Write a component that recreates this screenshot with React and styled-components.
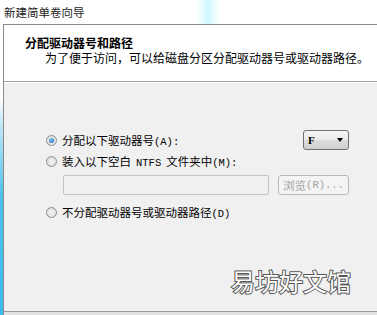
import styled, { createGlobalStyle } from "styled-components";

const GlobalStyle = createGlobalStyle`
  html, body {
    margin: 0;
    padding: 0;
    background: #ffffff;
  }
  body {
    font-family: "Noto Sans CJK SC", "Liberation Sans", sans-serif;
  }
`;

const Window = styled.div`
  width: 377px;
  height: 315px;
  overflow: hidden;
  display: flex;
  flex-direction: column;
  background: #ffffff;
  position: relative;
`;

const Glow = styled.div`
  position: absolute;
  left: 197px;
  top: 0;
  width: 22px;
  height: 24px;
  background: linear-gradient(90deg, rgba(200, 245, 255, 0), rgba(200, 245, 255, 0.9), rgba(200, 245, 255, 0));
`;

const TitleRow = styled.div`
  height: 24px;
  padding-left: 4px;
  display: flex;
  align-items: center;
  font-size: 11.5px;
  color: #222;
  flex-shrink: 0;
`;

const Frame = styled.div`
  flex: 1;
  display: flex;
  min-height: 0;
`;

const Edge = styled.div`
  width: 3px;
  flex-shrink: 0;
  background: linear-gradient(180deg, #ffffff 0%, #ffffff 25%, #bfe8f8 35%, #49c0ee 60%, #3bbdee 100%);
`;

const Panel = styled.div`
  flex: 1;
  display: flex;
  flex-direction: column;
  border-left: 1px solid #8a8a8a;
  border-top: 1px solid #8a8a8a;
`;

const Header = styled.div`
  height: 57px;
  background: #ffffff;
  padding: 10px 0 0 21px;
  box-sizing: border-box;
  border-bottom: 1px solid #a0a0a0;
  flex-shrink: 0;
`;

const Heading = styled.div`
  font-size: 12px;
  font-weight: bold;
  color: #000;
  line-height: 15px;
`;

const SubText = styled.div`
  font-size: 12px;
  color: #000;
  line-height: 15px;
  padding-left: 20px;
`;

const Body = styled.div`
  flex: 1;
  background: #f0f0f0;
  border-top: 1px solid #ffffff;
  border-bottom: 1px solid #9a9a9a;
  padding: 47px 28px 0 42px;
  display: flex;
  flex-direction: column;
`;

const Footer = styled.div`
  height: 3px;
  background: #e2e2e2;
  flex-shrink: 0;
`;

const OptionRow = styled.div`
  display: flex;
  align-items: center;
  justify-content: space-between;
  height: ${(p) => p.$h}px;
  margin-top: ${(p) => p.$mt || 0}px;
`;

const Label = styled.label`
  display: flex;
  align-items: center;
  gap: 5px;
  font-size: 11.5px;
  color: #000;
`;

const Radio = styled.span`
  width: 11px;
  height: 11px;
  border-radius: 50%;
  border: 1px solid #8e8e8e;
  box-sizing: border-box;
  background: radial-gradient(circle at 50% 50%, #f4f4f4 0%, #d4d4d4 100%);
  display: flex;
  align-items: center;
  justify-content: center;

  &::after {
    content: "";
    width: 5px;
    height: 5px;
    border-radius: 50%;
    background: radial-gradient(circle at 40% 35%, #7cc4f4 0%, #1a63c6 100%);
    display: ${(p) => (p.$checked ? "block" : "none")};
  }
`;

const Mono = styled.span`
  font-family: "Liberation Mono", "DejaVu Sans Mono", monospace;
  font-size: 10.5px;
  margin: 0 ${(p) => p.$space || 0}px;
`;

const Select = styled.div`
  width: 46px;
  height: 20px;
  box-sizing: border-box;
  border: 1px solid #707070;
  border-radius: 3px;
  background: linear-gradient(180deg, #f4f4f4 0%, #ebebeb 50%, #dddddd 51%, #cfcfcf 100%);
  display: flex;
  align-items: center;
  justify-content: space-between;
  padding: 0 5px 0 4px;
  font-family: "Liberation Serif", serif;
  font-weight: bold;
  font-size: 11px;
  color: #000;
`;

const Arrow = styled.span`
  width: 0;
  height: 0;
  border-left: 3.5px solid transparent;
  border-right: 3.5px solid transparent;
  border-top: 4px solid #000;
`;

const PathRow = styled.div`
  display: flex;
  align-items: center;
  justify-content: space-between;
  margin-top: 7px;
  padding-left: 17px;
`;

const PathInput = styled.div`
  width: 206px;
  height: 20px;
  box-sizing: border-box;
  border: 1px solid #c4c4c4;
  border-radius: 2px;
  background: #f0f0f0;
`;

const BrowseButton = styled.div`
  width: 71px;
  height: 20px;
  box-sizing: border-box;
  border: 1px solid #b8b8b8;
  border-radius: 3px;
  background: #f4f4f4;
  color: #a3a3a3;
  font-size: 11.5px;
  display: flex;
  align-items: center;
  justify-content: center;
`;

const Watermark = styled.div`
  margin-top: auto;
  margin-bottom: 18px;
  align-self: flex-end;
  margin-right: -2px;
  font-size: 24px;
  line-height: 24px;
  color: #ffffff;
  -webkit-text-stroke: 2px #555555;
  paint-order: stroke fill;
`;

export default function App() {
  return (
    <>
      <GlobalStyle />
      <Window>
        <Glow />
        <TitleRow>新建简单卷向导</TitleRow>
        <Frame>
          <Edge />
          <Panel>
            <Header>
              <Heading>分配驱动器号和路径</Heading>
              <SubText>为了便于访问，可以给磁盘分区分配驱动器号或驱动器路径。</SubText>
            </Header>
            <Body>
              <OptionRow $h={20}>
                <Label>
                  <Radio $checked />
                  <span>
                    分配以下驱动器号<Mono>(A):</Mono>
                  </span>
                </Label>
                <Select>
                  F
                  <Arrow />
                </Select>
              </OptionRow>
              <OptionRow $h={14} $mt={4}>
                <Label>
                  <Radio />
                  <span>
                    装入以下空白<Mono $space={5}>NTFS</Mono>文件夹中<Mono>(M):</Mono>
                  </span>
                </Label>
              </OptionRow>
              <PathRow>
                <PathInput />
                <BrowseButton>
                  浏览<Mono>(R)...</Mono>
                </BrowseButton>
              </PathRow>
              <OptionRow $h={14} $mt={10}>
                <Label>
                  <Radio />
                  <span>
                    不分配驱动器号或驱动器路径<Mono>(D)</Mono>
                  </span>
                </Label>
              </OptionRow>
              <Watermark>易坊好文馆</Watermark>
            </Body>
            <Footer />
          </Panel>
        </Frame>
      </Window>
    </>
  );
}
